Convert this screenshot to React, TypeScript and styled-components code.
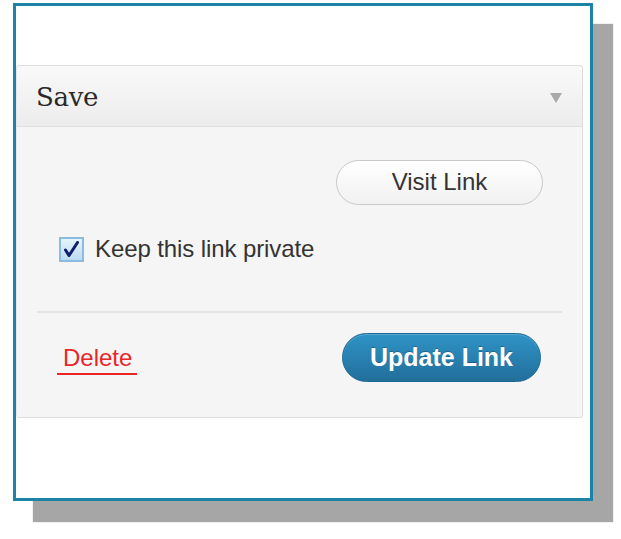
import React from "react";
import styled, { createGlobalStyle } from "styled-components";

const Global = createGlobalStyle`
  html, body { margin: 0; padding: 0; background: #ffffff; }
  body { font-family: "Liberation Sans", Arial, sans-serif; }
  * { box-sizing: border-box; }
`;

const Page = styled.div`
  width: 621px;
  height: 539px;
  padding: 3px 0 0 13px;
  overflow: hidden;
`;

const Frame = styled.div`
  width: 580px;
  height: 498px;
  border: 3px solid #1a83a6;
  background: #ffffff;
  box-shadow: 20px 21px 1px #a6a6a6;
  padding-top: 59px;
`;

const Card = styled.div`
  width: 567px;
  height: 353px;
  border: 1px solid #dddddd;
  border-left-color: #e6e6e6;
  border-radius: 3px;
  background: #f5f5f5;
  display: flex;
  flex-direction: column;
`;

const Header = styled.div`
  height: 61px;
  flex: none;
  display: flex;
  align-items: center;
  justify-content: space-between;
  padding: 2px 20px 0 19px;
  background: linear-gradient(#f9f9f9, #ececec);
  border-bottom: 1px solid #dfdfdf;
  border-radius: 3px 3px 0 0;
`;

const Title = styled.h3`
  margin: 0;
  font-family: "DejaVu Serif", Georgia, serif;
  font-weight: normal;
  font-size: 26px;
  color: #2a2a2a;
  letter-spacing: -0.3px;
`;

const Toggle = styled.span`
  width: 0;
  height: 0;
  margin-top: 2px;
  border-left: 6px solid transparent;
  border-right: 6px solid transparent;
  border-top: 10px solid #a9a9a9;
`;

const Body = styled.div`
  flex: 1;
  display: flex;
  flex-direction: column;
  padding: 33px 20px 0;
`;

const ActionRow = styled.div`
  display: flex;
  justify-content: flex-end;
  padding-right: 19px;
`;

const GhostButton = styled.button`
  width: 207px;
  height: 45px;
  border-radius: 23px;
  border: 1px solid #c9c9c9;
  background: linear-gradient(#ffffff, #f1f1f1);
  font-family: "Liberation Sans", Arial, sans-serif;
  font-size: 24px;
  color: #333333;
  padding: 0 0 1px 0;
  cursor: pointer;
`;

const CheckRow = styled.label`
  display: flex;
  align-items: center;
  gap: 11px;
  margin-top: 30px;
  padding-left: 22px;
  font-size: 24px;
  color: #333333;
  letter-spacing: -0.1px;
`;

const CheckBox = styled.span`
  width: 25px;
  height: 25px;
  flex: none;
  display: flex;
  align-items: center;
  justify-content: center;
  border: 2px solid #8cbbe0;
  background: linear-gradient(#e6f3fc, #bcdcf2);
`;

const Divider = styled.hr`
  margin: 48px 0 0;
  border: 0;
  border-top: 2px solid #e4e4e4;
  height: 0;
`;

const Footer = styled.div`
  display: flex;
  align-items: center;
  justify-content: space-between;
  margin-top: 20px;
  padding: 0 21px 0 20px;
`;

const DeleteLink = styled.a`
  font-size: 24px;
  line-height: 24px;
  color: #e8262a;
  text-decoration: none;
  padding: 0 5px 3px 6px;
  margin-top: 5px;
  border-bottom: 2px solid #e8262a;
  cursor: pointer;
`;

const PrimaryButton = styled.button`
  width: 199px;
  height: 49px;
  border-radius: 25px;
  border: 1px solid #1b6892;
  background: linear-gradient(#2f93c6, #226f9b);
  color: #ffffff;
  font-family: "Liberation Sans", Arial, sans-serif;
  font-weight: bold;
  font-size: 25px;
  padding: 0 0 1px 0;
  text-shadow: 0 -1px 0 rgba(0, 0, 0, 0.25);
  box-shadow: inset 0 1px 0 rgba(255, 255, 255, 0.2);
  cursor: pointer;
`;

export default function App() {
  return (
    <>
      <Global />
      <Page>
        <Frame>
          <Card>
            <Header>
              <Title>Save</Title>
              <Toggle />
            </Header>
            <Body>
              <ActionRow>
                <GhostButton>Visit Link</GhostButton>
              </ActionRow>
              <CheckRow>
                <CheckBox>
                  <svg width="15" height="16" viewBox="0 0 15 16">
                    <path
                      d="M1.5 9 L5 14.5 L13.5 1.5"
                      fill="none"
                      stroke="#121f6e"
                      strokeWidth="3"
                      strokeLinejoin="round"
                      strokeLinecap="round"
                    />
                  </svg>
                </CheckBox>
                Keep this link private
              </CheckRow>
              <Divider />
              <Footer>
                <DeleteLink>Delete</DeleteLink>
                <PrimaryButton>Update Link</PrimaryButton>
              </Footer>
            </Body>
          </Card>
        </Frame>
      </Page>
    </>
  );
}
